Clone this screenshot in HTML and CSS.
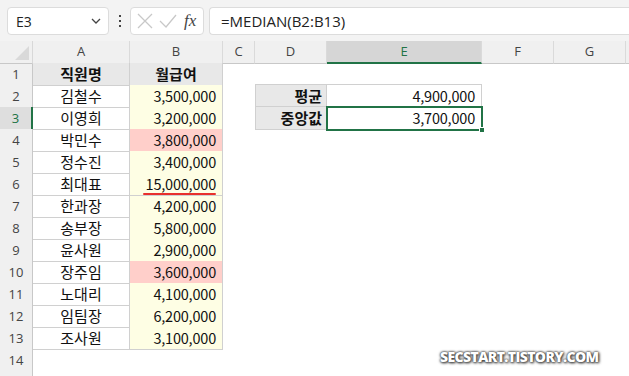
FILE: index.html
```html
<!DOCTYPE html>
<html>

<head>
  <meta charset="UTF-8">
  <link rel="stylesheet" href="styles.css">
</head>

<body>
  <div class="toolbar">
    <div class="name-box">
      <span>E3</span>
      <svg width="12" height="8" viewBox="0 0 12 8"><path d="M2 2 L6 6 L10 2" fill="none" stroke="#444" stroke-width="1.3"/></svg>
    </div>
    <div class="dots"><i></i><i></i><i></i></div>
    <div class="fx-box">
      <svg width="18" height="18" viewBox="0 0 18 18"><path d="M2 2 L16 16 M16 2 L2 16" stroke="#c8c8c8" stroke-width="1.3"/></svg>
      <svg width="20" height="18" viewBox="0 0 20 18"><path d="M2 9 L8 15 L18 3" fill="none" stroke="#c8c8c8" stroke-width="1.3"/></svg>
      <span class="fx">fx</span>
    </div>
    <div class="formula">=MEDIAN(B2:B13)</div>
  </div>

  <div class="sheet">
    <div class="row head">
      <div class="corner"><span class="tri"></span></div>
      <div class="ch">A</div>
      <div class="ch">B</div>
      <div class="ch">C</div>
      <div class="ch">D</div>
      <div class="ch active">E</div>
      <div class="ch">F</div>
      <div class="ch">G</div>
      <div class="ch last"></div>
    </div>

    <div class="row">
      <div class="rh">1</div>
      <div class="cell t th">직원명</div>
      <div class="cell t th">월급여</div>
      <div class="cell"></div><div class="cell"></div><div class="cell"></div>
    </div>
    <div class="row">
      <div class="rh">2</div>
      <div class="cell t name">김철수</div>
      <div class="cell t num pay">3,500,000</div>
      <div class="cell"></div>
      <div class="cell t th right top left">평균</div>
      <div class="cell t num top">4,900,000</div>
    </div>
    <div class="row">
      <div class="rh sel">3</div>
      <div class="cell t name">이영희</div>
      <div class="cell t num pay">3,200,000</div>
      <div class="cell"></div>
      <div class="cell t th right left">중앙값</div>
      <div class="cell t num picked">3,700,000<span class="handle"></span></div>
    </div>
    <div class="row">
      <div class="rh">4</div>
      <div class="cell t name">박민수</div>
      <div class="cell t num hot">3,800,000</div>
    </div>
    <div class="row">
      <div class="rh">5</div>
      <div class="cell t name">정수진</div>
      <div class="cell t num pay">3,400,000</div>
    </div>
    <div class="row">
      <div class="rh">6</div>
      <div class="cell t name">최대표</div>
      <div class="cell t num pay mark">15,000,000</div>
    </div>
    <div class="row">
      <div class="rh">7</div>
      <div class="cell t name">한과장</div>
      <div class="cell t num pay">4,200,000</div>
    </div>
    <div class="row">
      <div class="rh">8</div>
      <div class="cell t name">송부장</div>
      <div class="cell t num pay">5,800,000</div>
    </div>
    <div class="row">
      <div class="rh">9</div>
      <div class="cell t name">윤사원</div>
      <div class="cell t num pay">2,900,000</div>
    </div>
    <div class="row">
      <div class="rh">10</div>
      <div class="cell t name">장주임</div>
      <div class="cell t num hot">3,600,000</div>
    </div>
    <div class="row">
      <div class="rh">11</div>
      <div class="cell t name">노대리</div>
      <div class="cell t num pay">4,100,000</div>
    </div>
    <div class="row">
      <div class="rh">12</div>
      <div class="cell t name">임팀장</div>
      <div class="cell t num pay">6,200,000</div>
    </div>
    <div class="row">
      <div class="rh">13</div>
      <div class="cell t name">조사원</div>
      <div class="cell t num pay">3,100,000</div>
    </div>
    <div class="row">
      <div class="rh">14</div>
    </div>
    <div class="row">
      <div class="rh"></div>
    </div>

    <div class="watermark">SECSTART.TISTORY.COM</div>
  </div>
</body>

</html>
```

FILE: styles.css
```css
* {
  margin: 0;
  padding: 0;
  box-sizing: border-box;
}

body {
  width: 629px;
  height: 376px;
  overflow: hidden;
  background: #fff;
  font-family: "Noto Sans CJK KR", "Noto Sans", sans-serif;
  color: #222;
}

/* formula bar */
.toolbar {
  height: 41px;
  background: #f3f3f3;
  display: flex;
  align-items: flex-start;
  padding: 7px 0 0 7px;
}

.name-box {
  width: 102px;
  height: 28px;
  background: #fff;
  border: 1px solid #dcdcdc;
  border-radius: 4px;
  display: flex;
  align-items: center;
  justify-content: space-between;
  padding: 0 6px 0 8px;
  font-family: "Open Sans", "Noto Sans", sans-serif;
  font-size: 14px;
  color: #222;
}

.dots {
  width: 21px;
  height: 28px;
  display: flex;
  flex-direction: column;
  align-items: center;
  justify-content: center;
  gap: 3px;
}

.dots i {
  width: 2px;
  height: 2px;
  background: #444;
}

.fx-box {
  width: 74px;
  height: 28px;
  background: #fff;
  border: 1px solid #dcdcdc;
  border-radius: 4px;
  display: flex;
  align-items: center;
  padding: 0 4px 0 5px;
  gap: 4px;
}

.fx {
  font-family: "Liberation Serif", serif;
  font-style: italic;
  font-size: 17px;
  color: #444;
  margin-left: 2px;
}

.formula {
  flex: 1;
  height: 28px;
  margin-left: 5px;
  background: #fff;
  border: 1px solid #dcdcdc;
  border-right: none;
  border-radius: 4px 0 0 4px;
  padding-left: 11px;
  line-height: 26px;
  font-family: "Open Sans", "Noto Sans", sans-serif;
  font-size: 15px;
  color: #222;
}

/* sheet grid */
.sheet {
  position: relative;
}

.row {
  display: grid;
  grid-template-columns: 33px 97px 93px 32px 72px 155px 72px 72px 3px;
  height: 22px;
}

.head {
  background: #f0f0f0;
}

.corner {
  position: relative;
  border-right: 1px solid #d8d8d8;
  border-bottom: 1px solid #c8c8c8;
}

.tri {
  position: absolute;
  right: 3px;
  bottom: 3px;
  width: 0;
  height: 0;
  border-left: 14px solid transparent;
  border-bottom: 14px solid #d9d9d9;
}

.ch {
  border-right: 1px solid #dadada;
  border-bottom: 1px solid #c8c8c8;
  text-align: center;
  font-family: "Open Sans", "Noto Sans", sans-serif;
  font-size: 13px;
  line-height: 21px;
  color: #444;
}

.ch.active {
  background: #d6d6d6;
  color: #217346;
  border-bottom: 2px solid #217346;
}

.ch.last {
  border-right: none;
}

.rh {
  background: #f0f0f0;
  border-right: 1px solid #c8c8c8;
  border-bottom: 1px solid #dcdcdc;
  text-align: center;
  font-family: "Open Sans", "Noto Sans", sans-serif;
  font-size: 13px;
  line-height: 22px;
  color: #444;
}

.rh.sel {
  background: #dedede;
  color: #217346;
  border-right: 2px solid #217346;
}

.cell {
  font-size: 15px;
  line-height: 21px;
  color: #111;
  white-space: nowrap;
}

.t {
  border-right: 1px solid #d0d0d0;
  border-bottom: 1px solid #d0d0d0;
}

.t.top {
  border-top: 1px solid #d0d0d0;
  margin-top: -1px;
  height: 23px;
}

.t.left {
  border-left: 1px solid #d0d0d0;
}

.th {
  background: #e8e8e8;
  font-weight: 700;
  text-align: center;
}

.th.right {
  text-align: right;
  padding-right: 4px;
}

.name {
  text-align: center;
}

.num {
  text-align: right;
  padding-right: 6px;
  font-size: 14.5px;
  letter-spacing: -0.2px;
}

.pay {
  background: #fefee4;
}

.hot {
  background: #ffcfca;
}

.mark {
  position: relative;
}

.mark::after {
  content: "";
  position: absolute;
  left: 13px;
  right: 6px;
  bottom: 0;
  height: 2px;
  background: #e8302c;
  border-radius: 1px;
}

.picked {
  position: relative;
  outline: 2px solid #217346;
  outline-offset: -1px;
}

.handle {
  position: absolute;
  right: -4px;
  bottom: -4px;
  width: 6px;
  height: 6px;
  background: #217346;
  border: 1px solid #fff;
}

.watermark {
  position: absolute;
  left: 440px;
  top: 306px;
  font-family: "Open Sans", "Noto Sans", sans-serif;
  font-weight: 800;
  font-size: 14px;
  color: #fff;
  letter-spacing: -0.6px;
  text-shadow: 0 0 2px #333, 0 0 3px #555, 1px 1px 3px #333;
}
```
